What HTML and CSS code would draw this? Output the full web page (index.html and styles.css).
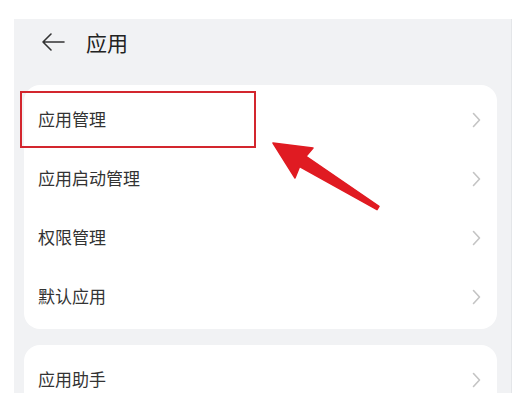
FILE: index.html
```html
<!DOCTYPE html>
<html lang="zh-CN">

<head>
    <meta charset="UTF-8">
    <meta name="viewport" content="width=device-width, initial-scale=1.0">
    <title>应用</title>
    <link rel="stylesheet" href="styles.css">
</head>

<body>
    <div class="screen">
        <div class="header">
            <svg class="back-icon" width="24" height="20" viewBox="0 0 24 20">
                <path d="M23 10H2M10 2L2 10l8 8" fill="none" stroke="#333" stroke-width="1.6" stroke-linecap="round" stroke-linejoin="round" />
            </svg>
            <div class="header-title">应用</div>
        </div>

        <div class="card">
            <div class="row"><span class="row-label">应用管理</span><span class="chevron"></span></div>
            <div class="row"><span class="row-label">应用启动管理</span><span class="chevron"></span></div>
            <div class="row"><span class="row-label">权限管理</span><span class="chevron"></span></div>
            <div class="row"><span class="row-label">默认应用</span><span class="chevron"></span></div>
        </div>

        <div class="card">
            <div class="row"><span class="row-label">应用助手</span><span class="chevron"></span></div>
        </div>

        <!-- annotation drawn over the screenshot, page coordinates -->
        <svg class="callout" viewBox="14 19 498 374">
            <rect x="21" y="92" width="234" height="55" fill="none" stroke="#d3262e" stroke-width="2" />
            <polygon points="273,143 313,148 306,156.3 379,206.3 377,209.7 299.6,166.5 295,178" fill="#e01b22" stroke="#e01b22" stroke-width="1.5" stroke-linejoin="round" />
        </svg>
    </div>

    <script>
        // chevrons are the same everywhere, fill them in once
        var chevrons = document.getElementsByClassName('chevron');
        for (var i = 0; i < chevrons.length; i++) {
            chevrons[i].innerHTML = '<svg width="9" height="16" viewBox="0 0 9 16"><polyline points="1.5,1.5 7.5,8 1.5,14.5" fill="none" stroke="#c4c4c4" stroke-width="1.6" stroke-linecap="round" stroke-linejoin="round"/></svg>';
        }
    </script>
</body>

</html>
```

FILE: styles.css
```css
html,
body {
    margin: 0;
    padding: 0;
    background-color: white;
}

body {
    font-family: "Noto Sans CJK SC", "Noto Sans", sans-serif;
    color: #333;
}

.screen {
    position: relative;
    width: 498px;
    height: 374px;
    margin: 19px 0 0 14px;
    background-color: #f1f2f4;
    border-right: 1px solid #e4e6e9;
    overflow: hidden;
    box-sizing: border-box;
}

.header {
    height: 45px;
    display: flex;
    align-items: center;
    padding-left: 27px;
}

.back-icon {
    display: block;
    margin-top: 1px;
}

.header-title {
    margin-left: 21px;
    font-size: 21px;
    color: #222;
}

.card {
    margin: 21px 14px 0 10px;
    padding: 4px 0;
    background-color: white;
    border-radius: 16px;
}

.card + .card {
    margin-top: 16px;
}

.row {
    height: 59px;
    display: flex;
    align-items: center;
    justify-content: space-between;
    padding: 0 16px 0 14px;
}

.row-label {
    font-size: 17px;
    line-height: 20px;
    color: #333;
}

.chevron {
    display: flex;
    align-items: center;
    margin-top: 2px;
}

.callout {
    position: absolute;
    left: 0;
    top: 0;
    width: 498px;
    height: 374px;
    pointer-events: none;
}
```
